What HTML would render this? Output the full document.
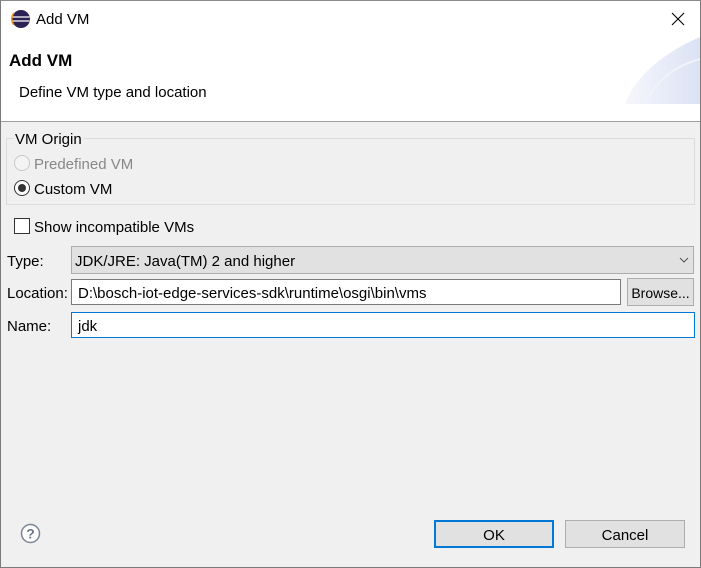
<!DOCTYPE html>
<html><head><style>
*{margin:0;padding:0;box-sizing:border-box}
body{width:701px;height:568px;overflow:hidden;font-family:"Liberation Sans",sans-serif;font-size:15px;color:#000;background:#f0f0f0;position:relative}
.win{position:absolute;left:0;top:0;width:701px;height:568px;border:1px solid #7a7a7a;border-top-color:#8a8a8a}
.a{position:absolute;white-space:nowrap}
.field{position:absolute;background:#fff;border:1px solid #7a7a7a}
.btn{position:absolute;background:#e1e1e1;border:1px solid #adadad;display:flex;align-items:center;justify-content:center;padding-top:2px}
</style></head><body>
<div class="a" style="left:1px;top:1px;width:699px;height:120px;background:#fff"></div>
<svg class="a" style="left:560px;top:36px" width="140" height="68"><defs><linearGradient id="g" x1="0" x2="1"><stop offset="0" stop-color="#f6f7fc"/><stop offset="1" stop-color="#dbe2f4"/></linearGradient></defs><path d="M65 68 C75 40 105 16 140 1 L140 68Z" fill="url(#g)"/><path d="M85 68 C95 45 115 30 140 23" stroke="#f1f3fa" fill="none" stroke-width="2"/></svg>
<div class="a" style="left:1px;top:121px;width:699px;height:1px;background:#a0a0a0"></div>
<svg class="a" style="left:11px;top:9px" width="20" height="20"><circle cx="10" cy="10" r="9" fill="#2c2255"/><path d="M1.5 8h17M1.5 12h17" stroke="#fff" stroke-width="1.3"/><path d="M3 4a9 9 0 0 0 0 12" stroke="#f7941e" stroke-width="1.5" fill="none"/></svg>
<div class="a" style="left:36px;top:11px">Add VM</div>
<svg class="a" style="left:671px;top:12px" width="14" height="14"><path d="M1 1L13 13M13 1L1 13" stroke="#000" stroke-width="1.1"/></svg>
<div class="a" style="left:9px;top:51px;font-size:17px;font-weight:bold">Add VM</div>
<div class="a" style="left:19px;top:84px">Define VM type and location</div>
<div class="a" style="left:6px;top:138px;width:689px;height:67px;border:1px solid #dcdcdc"></div>
<div class="a" style="left:13px;top:131px;background:#f0f0f0;padding:0 2px">VM Origin</div>
<div class="a" style="left:14px;top:155px;width:16px;height:16px;border-radius:50%;border:1px solid #c8c8c8;background:#f4f4f4"></div>
<div class="a" style="left:34px;top:156px;color:#888">Predefined VM</div>
<div class="a" style="left:14px;top:180px;width:16px;height:16px;border-radius:50%;border:1px solid #333;background:#fff"></div>
<div class="a" style="left:18px;top:184px;width:8px;height:8px;border-radius:50%;background:#333"></div>
<div class="a" style="left:34px;top:181px">Custom VM</div>
<div class="a" style="left:14px;top:218px;width:16px;height:16px;border:1px solid #333;background:#fff"></div>
<div class="a" style="left:34px;top:219px">Show incompatible VMs</div>
<div class="a" style="left:7px;top:253px">Type:</div>
<div class="a" style="left:71px;top:246px;width:623px;height:28px;background:#e1e1e1;border:1px solid #adadad"></div>
<div class="a" style="left:75px;top:253px">JDK/JRE: Java(TM) 2 and higher</div>
<svg class="a" style="left:679px;top:256px" width="10" height="8"><path d="M1 2L5 6L9 2" stroke="#555" fill="none"/></svg>
<div class="a" style="left:7px;top:285px">Location:</div>
<div class="field" style="left:71px;top:279px;width:550px;height:26px"></div>
<div class="a" style="left:78px;top:285px">D:\bosch-iot-edge-services-sdk\runtime\osgi\bin\vms</div>
<div class="btn" style="left:627px;top:278px;width:67px;height:28px;font-size:14px">Browse...</div>
<div class="a" style="left:7px;top:318px">Name:</div>
<div class="field" style="left:71px;top:312px;width:624px;height:26px;border-color:#0078d7"></div>
<div class="a" style="left:78px;top:318px">jdk</div>
<svg class="a" style="left:20px;top:523px" width="21" height="21"><circle cx="10.5" cy="10.5" r="9" fill="#fff" stroke="#7a8597" stroke-width="1.5"/><text x="10.5" y="15.5" text-anchor="middle" font-family="Liberation Sans" font-weight="bold" font-size="14" fill="#6a7587">?</text></svg>
<div class="btn" style="left:434px;top:520px;width:120px;height:28px;border:2px solid #0078d7">OK</div>
<div class="btn" style="left:565px;top:520px;width:120px;height:28px">Cancel</div>
<div class="win"></div>
</body></html>
